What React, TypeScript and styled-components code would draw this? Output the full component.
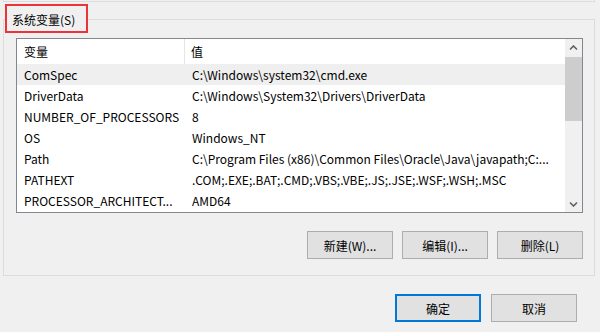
import React from 'react';
import styled, { createGlobalStyle } from 'styled-components';

const GlobalStyle = createGlobalStyle`
    html, body {
        margin: 0;
        padding: 0;
        background: #f0f0f0;
    }
    body {
        font-family: "Noto Sans CJK SC", "Noto Sans", sans-serif;
        font-size: 12px;
        color: #000;
    }
`;

const Page = styled.div`
    width: 600px;
    height: 332px;
    background: #f0f0f0;
    overflow: hidden;
`;

// bottom edge of the group box above, cut off by the screenshot
const PrevGroup = styled.div`
    height: 1px;
    margin: 0 5px 0 3px;
    border: 1px solid #dcdcdc;
    border-top: none;
`;

const GroupBox = styled.div`
    position: relative;
    box-sizing: border-box;
    height: 257px;
    margin: 17px 5px 0 3px;
    padding: 18px 11px 0 12px;
    border: 1px solid #dcdcdc;
`;

const GroupTitle = styled.div`
    position: absolute;
    left: 1px;
    top: -16px;
    box-sizing: border-box;
    width: 83px;
    height: 29px;
    padding: 2px 0 0 5px;
    border: 2px solid #ee3338;
    background: #f0f0f0;
    display: flex;
    align-items: center;
    white-space: nowrap;
`;

const ListView = styled.div`
    display: flex;
    box-sizing: border-box;
    width: 567px;
    height: 175px;
    border: 1px solid #828790;
    background: #fff;
`;

const ListBody = styled.div`
    flex: 1;
    min-width: 0;
    display: flex;
    flex-direction: column;
`;

const HeaderRow = styled.div`
    display: grid;
    grid-template-columns: 168px 1fr;
    height: 25px;
`;

const HeaderCell = styled.div<{ divider?: boolean }>`
    display: flex;
    align-items: center;
    padding-left: ${({ divider }) => (divider ? '7px' : '6px')};
    border-right: ${({ divider }) => (divider ? '1px solid #e5e5e5' : 'none')};
`;

const Row = styled.div<{ selected?: boolean }>`
    display: grid;
    grid-template-columns: 169px 1fr;
    height: 21px;
    align-items: center;
    background: ${({ selected }) => (selected ? '#efefef' : '#fff')};
`;

const Cell = styled.div<{ first?: boolean }>`
    padding-left: ${({ first }) => (first ? '7px' : '6px')};
    white-space: nowrap;
    overflow: hidden;
`;

const ScrollBar = styled.div`
    width: 17px;
    display: flex;
    flex-direction: column;
    background: #f0f0f0;
`;

const ScrollArrow = styled.div`
    height: 17px;
    display: flex;
    align-items: center;
    justify-content: center;
    color: #606060;
`;

const Track = styled.div`
    flex: 1;
    padding-top: 1px;
`;

const Thumb = styled.div`
    height: 64px;
    background: #cdcdcd;
`;

const ButtonRow = styled.div<{ gap: number }>`
    display: flex;
    justify-content: flex-end;
    gap: ${({ gap }) => gap}px;
`;

const GroupButtons = styled(ButtonRow)`
    width: 567px;
    margin-top: 18px;
`;

const Footer = styled(ButtonRow)`
    padding: 18px 23px 0 0;
`;

const Button = styled.button<{ primary?: boolean }>`
    box-sizing: border-box;
    width: 86px;
    height: 28px;
    padding: 0;
    font-family: "Noto Sans CJK SC", "Noto Sans", sans-serif;
    font-size: 12px;
    color: #000;
    background: #e1e1e1;
    border: ${({ primary }) => (primary ? '2px solid #0078d7' : '1px solid #adadad')};
`;

const Chevron = ({ down }: { down?: boolean }) => (
    <svg width="9" height="6" viewBox="0 0 9 6">
        <path
            d={down ? 'M1 1.5 L4.5 5 L8 1.5' : 'M1 4.5 L4.5 1 L8 4.5'}
            fill="none"
            stroke="currentColor"
            strokeWidth="1.6"
        />
    </svg>
);

const variables: [string, string][] = [
    ['ComSpec', 'C:\\Windows\\system32\\cmd.exe'],
    ['DriverData', 'C:\\Windows\\System32\\Drivers\\DriverData'],
    ['NUMBER_OF_PROCESSORS', '8'],
    ['OS', 'Windows_NT'],
    ['Path', 'C:\\Program Files (x86)\\Common Files\\Oracle\\Java\\javapath;C:...'],
    ['PATHEXT', '.COM;.EXE;.BAT;.CMD;.VBS;.VBE;.JS;.JSE;.WSF;.WSH;.MSC'],
    ['PROCESSOR_ARCHITECT...', 'AMD64'],
];

const App: React.FC = () => {
    return (
        <Page>
            <GlobalStyle />
            <PrevGroup />
            <GroupBox>
                <GroupTitle>系统变量(S)</GroupTitle>
                <ListView>
                    <ListBody>
                        <HeaderRow>
                            <HeaderCell divider>变量</HeaderCell>
                            <HeaderCell>值</HeaderCell>
                        </HeaderRow>
                        {variables.map(([name, value], i) => (
                            <Row key={name} selected={i === 0}>
                                <Cell first>{name}</Cell>
                                <Cell>{value}</Cell>
                            </Row>
                        ))}
                    </ListBody>
                    <ScrollBar>
                        <ScrollArrow>
                            <Chevron />
                        </ScrollArrow>
                        <Track>
                            <Thumb />
                        </Track>
                        <ScrollArrow>
                            <Chevron down />
                        </ScrollArrow>
                    </ScrollBar>
                </ListView>
                <GroupButtons gap={9}>
                    <Button>新建(W)...</Button>
                    <Button>编辑(I)...</Button>
                    <Button>删除(L)</Button>
                </GroupButtons>
            </GroupBox>
            <Footer gap={10}>
                <Button primary>确定</Button>
                <Button>取消</Button>
            </Footer>
        </Page>
    );
};

export default App;
